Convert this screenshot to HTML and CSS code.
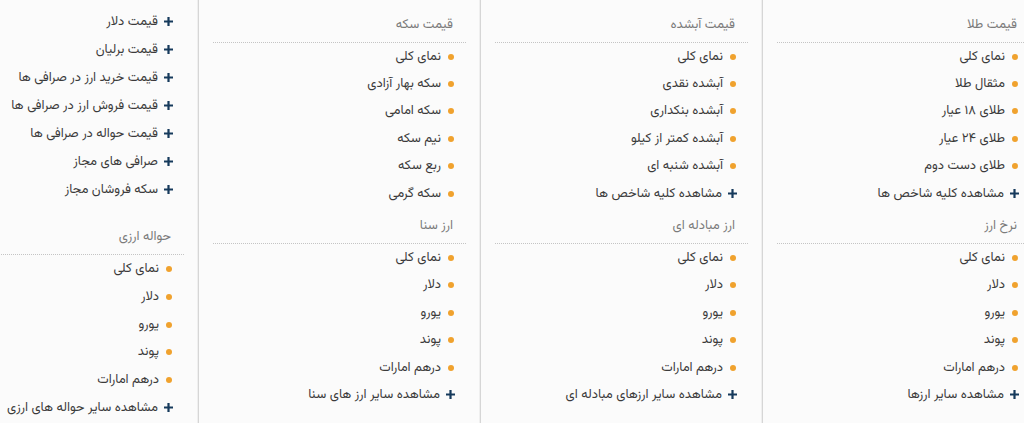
FILE: index.html
```html
<!DOCTYPE html>
<html lang="fa" dir="rtl">
<head>
<meta charset="utf-8">
<title>منو</title>
<link rel="stylesheet" href="styles.css">
</head>
<body>
<div class="viewport">
  <div class="menu">
    <div class="col">
      <div class="sec">
        <h3 class="sec-title">قیمت طلا</h3>
        <ul class="links">
          <li class="item"><span class="dot"></span><a>نمای کلی</a></li>
          <li class="item"><span class="dot"></span><a>مثقال طلا</a></li>
          <li class="item"><span class="dot"></span><a>طلای ۱۸ عیار</a></li>
          <li class="item"><span class="dot"></span><a>طلای ۲۴ عیار</a></li>
          <li class="item"><span class="dot"></span><a>طلای دست دوم</a></li>
          <li class="item"><svg class="plus" viewBox="0 0 9 9"><path d="M3.4 0h2.2v3.4H9v2.2H5.6V9H3.4V5.6H0V3.4h3.4z"/></svg><a>مشاهده کلیه شاخص ها</a></li>
        </ul>
      </div>
      <div class="sec">
        <h3 class="sec-title">نرخ ارز</h3>
        <ul class="links">
          <li class="item"><span class="dot"></span><a>نمای کلی</a></li>
          <li class="item"><span class="dot"></span><a>دلار</a></li>
          <li class="item"><span class="dot"></span><a>یورو</a></li>
          <li class="item"><span class="dot"></span><a>پوند</a></li>
          <li class="item"><span class="dot"></span><a>درهم امارات</a></li>
          <li class="item"><svg class="plus" viewBox="0 0 9 9"><path d="M3.4 0h2.2v3.4H9v2.2H5.6V9H3.4V5.6H0V3.4h3.4z"/></svg><a>مشاهده سایر ارزها</a></li>
        </ul>
      </div>
    </div>

    <div class="col">
      <div class="sec">
        <h3 class="sec-title">قیمت آبشده</h3>
        <ul class="links">
          <li class="item"><span class="dot"></span><a>نمای کلی</a></li>
          <li class="item"><span class="dot"></span><a>آبشده نقدی</a></li>
          <li class="item"><span class="dot"></span><a>آبشده بنکداری</a></li>
          <li class="item"><span class="dot"></span><a>آبشده کمتر از کیلو</a></li>
          <li class="item"><span class="dot"></span><a>آبشده شنبه ای</a></li>
          <li class="item"><svg class="plus" viewBox="0 0 9 9"><path d="M3.4 0h2.2v3.4H9v2.2H5.6V9H3.4V5.6H0V3.4h3.4z"/></svg><a>مشاهده کلیه شاخص ها</a></li>
        </ul>
      </div>
      <div class="sec">
        <h3 class="sec-title">ارز مبادله ای</h3>
        <ul class="links">
          <li class="item"><span class="dot"></span><a>نمای کلی</a></li>
          <li class="item"><span class="dot"></span><a>دلار</a></li>
          <li class="item"><span class="dot"></span><a>یورو</a></li>
          <li class="item"><span class="dot"></span><a>پوند</a></li>
          <li class="item"><span class="dot"></span><a>درهم امارات</a></li>
          <li class="item"><svg class="plus" viewBox="0 0 9 9"><path d="M3.4 0h2.2v3.4H9v2.2H5.6V9H3.4V5.6H0V3.4h3.4z"/></svg><a>مشاهده سایر ارزهای مبادله ای</a></li>
        </ul>
      </div>
    </div>

    <div class="col">
      <div class="sec">
        <h3 class="sec-title">قیمت سکه</h3>
        <ul class="links">
          <li class="item"><span class="dot"></span><a>نمای کلی</a></li>
          <li class="item"><span class="dot"></span><a>سکه بهار آزادی</a></li>
          <li class="item"><span class="dot"></span><a>سکه امامی</a></li>
          <li class="item"><span class="dot"></span><a>نیم سکه</a></li>
          <li class="item"><span class="dot"></span><a>ربع سکه</a></li>
          <li class="item"><span class="dot"></span><a>سکه گرمی</a></li>
        </ul>
      </div>
      <div class="sec">
        <h3 class="sec-title">ارز سنا</h3>
        <ul class="links">
          <li class="item"><span class="dot"></span><a>نمای کلی</a></li>
          <li class="item"><span class="dot"></span><a>دلار</a></li>
          <li class="item"><span class="dot"></span><a>یورو</a></li>
          <li class="item"><span class="dot"></span><a>پوند</a></li>
          <li class="item"><span class="dot"></span><a>درهم امارات</a></li>
          <li class="item"><svg class="plus" viewBox="0 0 9 9"><path d="M3.4 0h2.2v3.4H9v2.2H5.6V9H3.4V5.6H0V3.4h3.4z"/></svg><a>مشاهده سایر ارز های سنا</a></li>
        </ul>
      </div>
    </div>

    <div class="col">
      <ul class="links quick">
        <li class="item"><svg class="plus" viewBox="0 0 9 9"><path d="M3.4 0h2.2v3.4H9v2.2H5.6V9H3.4V5.6H0V3.4h3.4z"/></svg><a>قیمت دلار</a></li>
        <li class="item"><svg class="plus" viewBox="0 0 9 9"><path d="M3.4 0h2.2v3.4H9v2.2H5.6V9H3.4V5.6H0V3.4h3.4z"/></svg><a>قیمت برلیان</a></li>
        <li class="item"><svg class="plus" viewBox="0 0 9 9"><path d="M3.4 0h2.2v3.4H9v2.2H5.6V9H3.4V5.6H0V3.4h3.4z"/></svg><a>قیمت خرید ارز در صرافی ها</a></li>
        <li class="item"><svg class="plus" viewBox="0 0 9 9"><path d="M3.4 0h2.2v3.4H9v2.2H5.6V9H3.4V5.6H0V3.4h3.4z"/></svg><a>قیمت فروش ارز در صرافی ها</a></li>
        <li class="item"><svg class="plus" viewBox="0 0 9 9"><path d="M3.4 0h2.2v3.4H9v2.2H5.6V9H3.4V5.6H0V3.4h3.4z"/></svg><a>قیمت حواله در صرافی ها</a></li>
        <li class="item"><svg class="plus" viewBox="0 0 9 9"><path d="M3.4 0h2.2v3.4H9v2.2H5.6V9H3.4V5.6H0V3.4h3.4z"/></svg><a>صرافی های مجاز</a></li>
        <li class="item"><svg class="plus" viewBox="0 0 9 9"><path d="M3.4 0h2.2v3.4H9v2.2H5.6V9H3.4V5.6H0V3.4h3.4z"/></svg><a>سکه فروشان مجاز</a></li>
      </ul>
      <div class="sec">
        <h3 class="sec-title">حواله ارزی</h3>
        <ul class="links mid">
          <li class="item"><span class="dot"></span><a>نمای کلی</a></li>
          <li class="item"><span class="dot"></span><a>دلار</a></li>
          <li class="item"><span class="dot"></span><a>یورو</a></li>
          <li class="item"><span class="dot"></span><a>پوند</a></li>
          <li class="item"><span class="dot"></span><a>درهم امارات</a></li>
          <li class="item"><svg class="plus" viewBox="0 0 9 9"><path d="M3.4 0h2.2v3.4H9v2.2H5.6V9H3.4V5.6H0V3.4h3.4z"/></svg><a>مشاهده سایر حواله های ارزی</a></li>
        </ul>
      </div>
    </div>
  </div>
</div>
</body>
</html>
```

FILE: styles.css
```css
html, body {
  margin: 0;
  padding: 0;
  background: #fbfbfb;
}

body {
  font-family: "Vazirmatn", "Noto Sans Arabic", "DejaVu Sans", sans-serif;
  font-size: 13px;
  color: #3b3b3b;
}

.viewport {
  height: 423px;
  overflow: hidden;
}

.menu {
  display: flex;
  direction: rtl;
  margin-right: -20px;
}

.col {
  flex: 0 0 282px;
  box-sizing: border-box;
  padding: 6px 14px 0;
  border-left: 1px solid #d6d6d6;
  box-shadow: -1px 0 0 #efefef;
  height: 423px;
}

.sec-title {
  margin: 0;
  padding: 9px 13px 7px 0;
  line-height: 20px;
  font-size: 13px;
  font-weight: normal;
  color: #7b7b7b;
  border-bottom: 1px dotted #c4c4c4;
}

.links {
  list-style: none;
  margin: 0;
  padding: 0;
}

.item {
  display: flex;
  align-items: center;
  gap: 7px;
  height: 27.4px;
  padding-right: 12px;
}

.item a {
  color: #3b3b3b;
  text-decoration: none;
  white-space: nowrap;
}

.dot {
  flex: 0 0 auto;
  width: 6px;
  height: 6px;
  border-radius: 50%;
  background: #f0a22e;
}

.plus {
  flex: 0 0 auto;
  width: 9px;
  height: 9px;
  margin-right: -1px;
  margin-left: -1px;
  fill: #163a5c;
}

.quick {
  padding-top: 1.7px;
  margin-bottom: 14.6px;
}

.quick .item {
  height: 28px;
}

.mid .item {
  height: 27.7px;
}
```
